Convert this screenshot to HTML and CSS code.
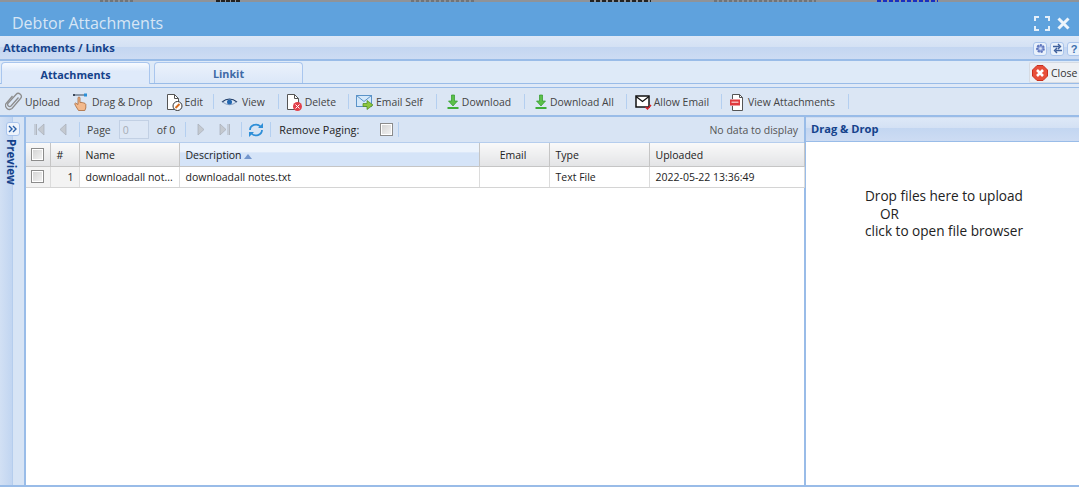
FILE: index.html
```html
<!DOCTYPE html>
<html lang="en">
<head>
<meta charset="utf-8">
<title>Debtor Attachments</title>
<link rel="stylesheet" href="styles.css">
</head>
<body>
<div class="backdrop">
  <span class="frag f1"></span><span class="frag f2"></span><span class="frag f3"></span><span class="frag f4"></span><span class="frag f5"></span><span class="frag f6"></span>
</div>
<header class="titlebar">
  <span class="title">Debtor Attachments</span>
  <span class="win-tools">
    <svg width="16" height="15" viewBox="0 0 16 15"><path d="M1 5V1h4M11 1h4v4M15 10v4h-4M5 14H1v-4" fill="none" stroke="#e4eff9" stroke-width="2"/></svg>
    <svg width="13" height="13" viewBox="0 0 13 13"><path d="M1.5 1.5l10 10M11.5 1.5l-10 10" fill="none" stroke="#eef5fb" stroke-width="3"/></svg>
  </span>
</header>
<div class="panelhead">
  <span class="panelhead-text">Attachments / Links</span>
  <span class="head-tools">
    <span class="tool-btn"><svg width="11" height="11" viewBox="0 0 11 11"><circle cx="5.5" cy="5.5" r="3.4" fill="#8c9fd8" stroke="#5f76bd" stroke-width="2" stroke-dasharray="2 1"/><circle cx="5.5" cy="5.5" r="1.3" fill="#dbe4f7"/></svg></span>
    <span class="tool-btn"><svg width="11" height="11" viewBox="0 0 11 11"><path d="M1 3.5h6.5M6 1l2.5 2.5L6 6M10 7.5H3.5M5 5L2.500 7.500 5 10" fill="none" stroke="#3d5f9c" stroke-width="1.400"/></svg></span>
    <span class="tool-btn help">?</span>
  </span>
</div>
<nav class="tabstrip">
  <span class="tab active">Attachments</span>
  <span class="tab">Linkit</span>
  <span class="close-btn">
    <svg width="16" height="16" viewBox="0 0 16 16"><path d="M5 .5h6L15.500 5v6L11 15.500H5L.5 11V5z" fill="#e8503a" stroke="#c9301f"/><path d="M5 5l6 6M11 5l-6 6" stroke="#fff" stroke-width="2.600"/></svg>
    Close
  </span>
</nav>
<div class="tabband"></div>
<div class="toolbar">
  <span class="tb i1"><svg width="18" height="20" viewBox="0 0 18 20"><path d="M13.500 5.500L6 14a2 2 0 0 1-3-2.600L11 2.500a3 3 0 0 1 4.500 4L7 16.500a4 4 0 0 1-6-5L7.500 4" fill="none" stroke="#8d8d8d" stroke-width="1.300"/></svg>Upload</span>
  <span class="tb i2"><svg width="18" height="20" viewBox="0 0 18 20"><path d="M2 3h11" stroke="#3c4a5c"/><rect x="1" y="2" width="2" height="2" fill="#3c4a5c"/><rect x="12" y="1.500" width="3" height="3" fill="#2a8fd8"/><path d="M6 6a1 1 0 0 1 2 0v4.500l1-.2 1.300.3 1.400.3 1.300.5.800.8v3.800l-1 2.500H6.500l-3-4.800-.8-2 .8-.7 2.500 1.500z" fill="#f3b98c" stroke="#a8683a" stroke-width=".8"/></svg>Drag &amp; Drop</span>
  <span class="tb i3"><svg width="17" height="20" viewBox="0 0 17 20"><path d="M1.500 2.500h7l4 4v11h-11z" fill="#fff" stroke="#555"/><path d="M8.500 2.500v4h4" fill="none" stroke="#555"/><circle cx="11.500" cy="14" r="4.500" fill="#fff" stroke="#333"/><path d="M9.500 16l4-4" stroke="#d86a1a" stroke-width="2"/></svg>Edit</span>
  <i class="sep"></i>
  <span class="tb i4"><svg width="17" height="20" viewBox="0 0 17 20"><path d="M1 10q7.500-6 15 0" fill="none" stroke="#1d3a66" stroke-width="1.200"/><path d="M1.500 10q7 5.500 14 0" fill="none" stroke="#8ba3c4"/><circle cx="8.500" cy="10" r="2.500" fill="#2166b0"/></svg>View</span>
  <i class="sep"></i>
  <span class="tb i5"><svg width="17" height="20" viewBox="0 0 17 20"><path d="M1.500 2.500h7l4 4v11h-11z" fill="#fff" stroke="#555"/><path d="M8.500 2.500v4h4" fill="none" stroke="#555"/><circle cx="11.500" cy="14.500" r="4.500" fill="#e2404a"/><path d="M9.500 12.500l4 4M13.500 12.500l-4 4" stroke="#fff"/></svg>Delete</span>
  <i class="sep"></i>
  <span class="tb i6"><svg width="18" height="20" viewBox="0 0 18 20"><rect x=".5" y="3.500" width="15" height="11" fill="#d4e8fa" stroke="#5b93c8"/><path d="M.5 3.500L8 9.500l7.500-6" fill="none" stroke="#5b93c8"/><path d="M7 11.500h4V8.500l6 4.500-6 4.500v-3H7z" fill="#8cc63e" stroke="#4a8a1a" stroke-width=".7"/></svg>Email Self</span>
  <i class="sep"></i>
  <span class="tb i7"><svg width="14" height="20" viewBox="0 0 14 20"><path d="M5.500 3h3v6h3l-4.500 5-4.500-5h3z" fill="#5cc04a" stroke="#2e9a2a" stroke-width=".7"/><rect x="1.500" y="15" width="11" height="2" fill="#3fae38"/></svg>Download</span>
  <i class="sep"></i>
  <span class="tb i8"><svg width="14" height="20" viewBox="0 0 14 20"><path d="M5.500 3h3v6h3l-4.500 5-4.500-5h3z" fill="#5cc04a" stroke="#2e9a2a" stroke-width=".7"/><rect x="1.500" y="15" width="11" height="2" fill="#3fae38"/></svg>Download All</span>
  <i class="sep"></i>
  <span class="tb i9"><svg width="17" height="20" viewBox="0 0 17 20"><rect x="1" y="4" width="13" height="11" fill="#fff" stroke="#111" stroke-width="1.500"/><path d="M1 4.500l6.500 5 6.500-5" fill="none" stroke="#111" stroke-width="1.300"/><path d="M10.500 15l2 2 3.500-4" fill="none" stroke="#d8202a" stroke-width="1.500"/></svg>Allow Email</span>
  <i class="sep"></i>
  <span class="tb i10"><svg width="17" height="20" viewBox="0 0 17 20"><path d="M3.500 7V2.500h7l3 3v13h-10V14" fill="#fff" stroke="#555"/><path d="M10.500 2.500v3h3" fill="none" stroke="#555"/><rect x="1" y="7.500" width="10" height="6" fill="#e0393e"/><rect x="2.500" y="9.500" width="7" height="1.500" fill="#f6b5b5"/></svg>View Attachments</span>
  <i class="sep"></i>
</div>
<main class="workspace">
  <aside class="preview">
    <div class="preview-dark"></div>
    <div class="preview-light">
      <span class="expand"><svg width="10" height="8" viewBox="0 0 10 8"><path d="M1 1l3 3-3 3M5 1l3 3-3 3" fill="none" stroke="#2a5fa8" stroke-width="1.400"/></svg></span>
      <span class="preview-text">Preview</span>
    </div>
  </aside>
  <section class="grid-panel">
    <div class="pager">
      <svg class="pg" width="13" height="13" viewBox="0 0 13 13"><path d="M2 1v11M3.500 1v11" stroke="#b0b6bf" stroke-width="1"/><path d="M11 1v11L5 6.500z" fill="#c4c9d0" stroke="#a8aeb7" stroke-width=".7"/></svg>
      <svg class="pg" width="13" height="13" viewBox="0 0 13 13"><path d="M10 1v11L4 6.500z" fill="#c4c9d0" stroke="#a8aeb7" stroke-width=".7"/></svg>
      <i class="sep"></i>
      <span class="pg-label">Page</span>
      <span class="pg-input">0</span>
      <span class="pg-of">of 0</span>
      <i class="sep"></i>
      <svg class="pg" width="13" height="13" viewBox="0 0 13 13"><path d="M3 1v11l6-5.500z" fill="#c4c9d0" stroke="#a8aeb7" stroke-width=".7"/></svg>
      <svg class="pg" width="13" height="13" viewBox="0 0 13 13"><path d="M2 1v11l6-5.500z" fill="#c4c9d0" stroke="#a8aeb7" stroke-width=".7"/><path d="M10 1v11M11.500 1v11" stroke="#b0b6bf"/></svg>
      <i class="sep"></i>
      <svg class="refresh" width="16" height="16" viewBox="0 0 16 16"><path d="M2 8a6 5.500 0 0 1 10.500-3.500M14 8a6 5.500 0 0 1-10.500 3.500" fill="none" stroke="#2f8fd8" stroke-width="1.800"/><path d="M15 1v5h-5zM1 15v-5h5z" fill="#2f8fd8"/></svg>
      <i class="sep"></i>
      <span class="pg-remove">Remove Paging:</span>
      <span class="check pg-check"></span>
      <i class="sep"></i>
      <span class="pg-info">No data to display</span>
    </div>
    <table class="grid">
      <colgroup>
        <col class="c1"><col class="c2"><col class="c3"><col class="c4"><col class="c5"><col class="c6"><col class="c7">
      </colgroup>
      <thead>
        <tr>
          <th class="ck"><span class="check"></span></th>
          <th>#</th>
          <th>Name</th>
          <th class="sorted">Description <svg width="8" height="5" viewBox="0 0 8 5"><path d="M4 0L8 5H0z" fill="#7396cc"/></svg></th>
          <th class="ctr">Email</th>
          <th>Type</th>
          <th>Uploaded</th>
        </tr>
      </thead>
      <tbody>
        <tr>
          <td class="ck"><span class="check"></span></td>
          <td class="num">1</td>
          <td>downloadall not...</td>
          <td>downloadall notes.txt</td>
          <td></td>
          <td>Text File</td>
          <td>2022-05-22 13:36:49</td>
        </tr>
      </tbody>
    </table>
  </section>
  <section class="drop-panel">
    <div class="drop-head">Drag &amp; Drop</div>
    <div class="drop-body">
      <div>Drop files here to upload</div>
      <div class="or">OR</div>
      <div>click to open file browser</div>
    </div>
  </section>
</main>
</body>
</html>
```
FILE: styles.css
```css
* { box-sizing: border-box; }
html, body { margin: 0; height: 100%; }
body {
  width: 1079px;
  height: 487px;
  overflow: hidden;
  display: flex;
  flex-direction: column;
  background: #fff;
  font-family: "Open Sans", "Liberation Sans", sans-serif;
  font-size: 10px;
  color: #333;
}
.backdrop { height: 2px; flex: none; background: #8f9398; display: flex; }
.frag { height: 2px; display: block; background: repeating-linear-gradient(90deg, #555 0 3px, transparent 3px 5px); }
.f1 { width: 34px; margin-left: 100px; opacity: .5; }
.f2 { width: 24px; margin-left: 82px; background: repeating-linear-gradient(90deg, #222 0 4px, transparent 4px 5px); }
.f3 { width: 65px; margin-left: 171px; opacity: .5; }
.f4 { width: 61px; margin-left: 114px; background: repeating-linear-gradient(90deg, #222 0 4px, transparent 4px 6px); }
.f5 { width: 102px; margin-left: 63px; opacity: .5; }
.f6 { width: 61px; margin-left: 61px; background: repeating-linear-gradient(90deg, #1a2fc0 0 4px, transparent 4px 6px); }

.titlebar {
  height: 34px;
  flex: none;
  background: #5fa2dd;
  display: flex;
  align-items: center;
  justify-content: space-between;
  padding: 8px 9px 0 12px;
}
.title { font-size: 16px; color: #d7e6f5; font-family: "Open Sans", sans-serif; }
.win-tools { display: flex; gap: 7px; align-items: center; }

.panelhead {
  height: 25px;
  flex: none;
  background: linear-gradient(#dde8f7 0, #d4e1f4 46%, #c3d6f1 48%, #cddcf3 100%);
  border-bottom: 2px solid #99bce8;
  display: flex;
  justify-content: space-between;
  align-items: center;
  padding-left: 3px;
}
.panelhead-text { font: bold 11.100px "Open Sans", sans-serif; color: #15428b; }
.head-tools { display: flex; gap: 3px; margin-right: -2px; padding-top: 2px; }
.tool-btn {
  width: 14px; height: 14px;
  border: 1px solid #a9c4ec;
  border-radius: 3px;
  background: #e9f1fb;
  display: flex; align-items: center; justify-content: center;
  font: bold 11px "Liberation Sans", sans-serif;
  color: #3d6fae;
}

.tabstrip {
  height: 23px;
  flex: none;
  background: #deeaf8;
  border-bottom: 1px solid #99bce8;
  display: flex;
  align-items: flex-end;
  padding-left: 1px;
  gap: 4px;
}
.tab {
  width: 149px; height: 21px;
  padding-top: 1px;
  border: 1px solid #a9c6ee;
  border-bottom: none;
  border-radius: 4px 4px 0 0;
  background: linear-gradient(#ebf2fb, #dbe7f8);
  display: flex; align-items: center; justify-content: center;
  font: bold 10.800px "Open Sans", sans-serif;
  color: #3f6aa6;
}
.tab.active { background: linear-gradient(#f8fbff, #dfeafa 40%); color: #15428b; margin-bottom: -1px; height: 22px; }
.close-btn {
  margin-left: auto;
  height: 21px; width: 50px;
  align-self: flex-start; margin-top: 1px;
  background: #edf0f4;
  border: 1px solid #d6dbe3;
  border-right: none;
  border-radius: 2px 0 0 2px;
  display: flex; align-items: center; gap: 3px; padding-left: 2px;
  white-space: nowrap;
  font-size: 10.500px;
  color: #333;
}
.tabband { height: 4px; flex: none; background: #dfe9f7; border-bottom: 1px solid #99bce8; }

.toolbar {
  height: 29px;
  flex: none;
  background: #dbe6f4;
  border-bottom: 2px solid #99bce8;
  display: flex; align-items: center;
  padding-left: 5px;
}
.tb { display: flex; align-items: center; gap: 2px; white-space: nowrap; font-size: 10.400px; color: #444; }
.sep { width: 1px; height: 15px; background: #b4cff0; flex: none; }
.i1 { margin-right: 12px; }
.i2 { margin-right: 13px; }
.i3 { margin-right: 10px; }
.toolbar .sep { margin-right: 7px; }
.i4 { margin-right: 13px; gap: 4px; }
.i5 { margin-right: 12px; }
.i6 { margin-right: 13px; }
.i7 { margin-right: 13px; margin-left: 2px; }
.i8 { margin-right: 12px; margin-left: 2px; }
.i9 { margin-right: 12px; margin-left: 1px; }
.i10 { margin-right: 13px; }

.workspace { flex: 1; display: flex; min-height: 0; border-bottom: 2px solid #99bce8; }
.preview { width: 26px; flex: none; display: flex; border-right: 2px solid #99bce8; }
.preview-dark { width: 13px; background: linear-gradient(90deg, #d2e0f4, #c1d5f1); border-right: 1px solid #b5cded; }
.preview-light { flex: 1; background: #d7e4f5; position: relative; }
.expand {
  position: absolute; left: -7px; top: 5px;
  width: 14px; height: 14px;
  background: #edf3fc; border: 1px solid #a9c4ec; border-radius: 3px;
  display: flex; align-items: center; justify-content: center;
}
.preview-text {
  position: absolute; left: -9px; top: 22px;
  writing-mode: vertical-rl;
  font: bold 11.500px "Open Sans", sans-serif;
  color: #15428b;
}

.grid-panel { width: 780px; flex: none; border-right: 2px solid #99bce8; display: flex; flex-direction: column; }
.pager {
  height: 26px; flex: none;
  background: #d8e4f4;
  border-bottom: 1px solid #b5cded;
  display: flex; align-items: center;
  padding-left: 7px;
  font-size: 10.500px;
  color: #444;
}
.pg { margin-right: 10px; flex: none; }
.pg-label { margin-left: 7px; }
.pg-input {
  width: 30px; height: 19px; margin-left: 8px;
  background: #dde7f5; border: 1px solid #c2d0e4;
  color: #a7adb5; padding: 2px 0 0 3px; line-height: 14px;
}
.pg-of { margin-left: 8px; margin-right: 10px; }
.pager .sep + .pg { margin-left: 9px; }
.refresh { margin: 0 6px; flex: none; }
.pg-remove { margin-left: 8px; color: #222; font-size: 10.800px; }
.check {
  display: block;
  width: 13px; height: 13px;
  border: 1px solid #8b8b8b;
  background: linear-gradient(135deg, #d2d2d2, #f4f4f4);
  box-shadow: inset 0 0 0 1px #fff;
}
.pg-check { margin: 0 5px 0 21px; }
.pg-info { margin-left: auto; margin-right: 6px; color: #555; }

.grid { width: 778px; border-collapse: collapse; table-layout: fixed; font-size: 10.500px; color: #222; }
.c1 { width: 24px; }
.c2 { width: 29px; }
.c3 { width: 100px; }
.c4 { width: 300px; }
.c5 { width: 70px; }
.c6 { width: 100px; }
.c7 { width: 155px; }
th {
  height: 23px; padding: 1px 6px 0;
  font-weight: normal; text-align: left;
  background: linear-gradient(#f9f9f9, #e3e4e6);
  border-right: 1px solid #c5c5c5;
  border-bottom: 1px solid #c5c5c5;
}
th.sorted { background: linear-gradient(#ecf3fc 0, #ecf3fc 40%, #d5e4f8 42%, #d5e4f8 100%); }
th.ctr { text-align: center; padding-left: 4px; }
td {
  height: 21px; padding: 0 6px;
  border-right: 1px solid #dcdcdc;
  border-bottom: 1px solid #d4d4d4;
  white-space: nowrap; overflow: hidden;
}
.ck { padding: 0 0 0 5px; background: #f3f3f3; }
th.ck { background: linear-gradient(#f9f9f9, #e3e4e6); padding: 0 0 0 5px; }
.num { text-align: right; background: #f3f3f3; padding-right: 5px; }

.drop-panel { flex: 1; display: flex; flex-direction: column; border-top: 1px solid #cfdcf0; }
.drop-head {
  height: 24px; flex: none;
  background: linear-gradient(#dde8f7 0, #d4e1f4 42%, #c3d6f1 45%, #cddcf3 100%);
  border-bottom: 1px solid #99bce8;
  padding: 3px 0 0 5px;
  font: bold 11.100px "Open Sans", sans-serif;
  color: #15428b;
}
.drop-body {
  padding: 45px 0 0 59px;
  font-size: 13.600px; line-height: 17.500px;
  color: #222;
}
.or { padding-left: 15px; }
```
